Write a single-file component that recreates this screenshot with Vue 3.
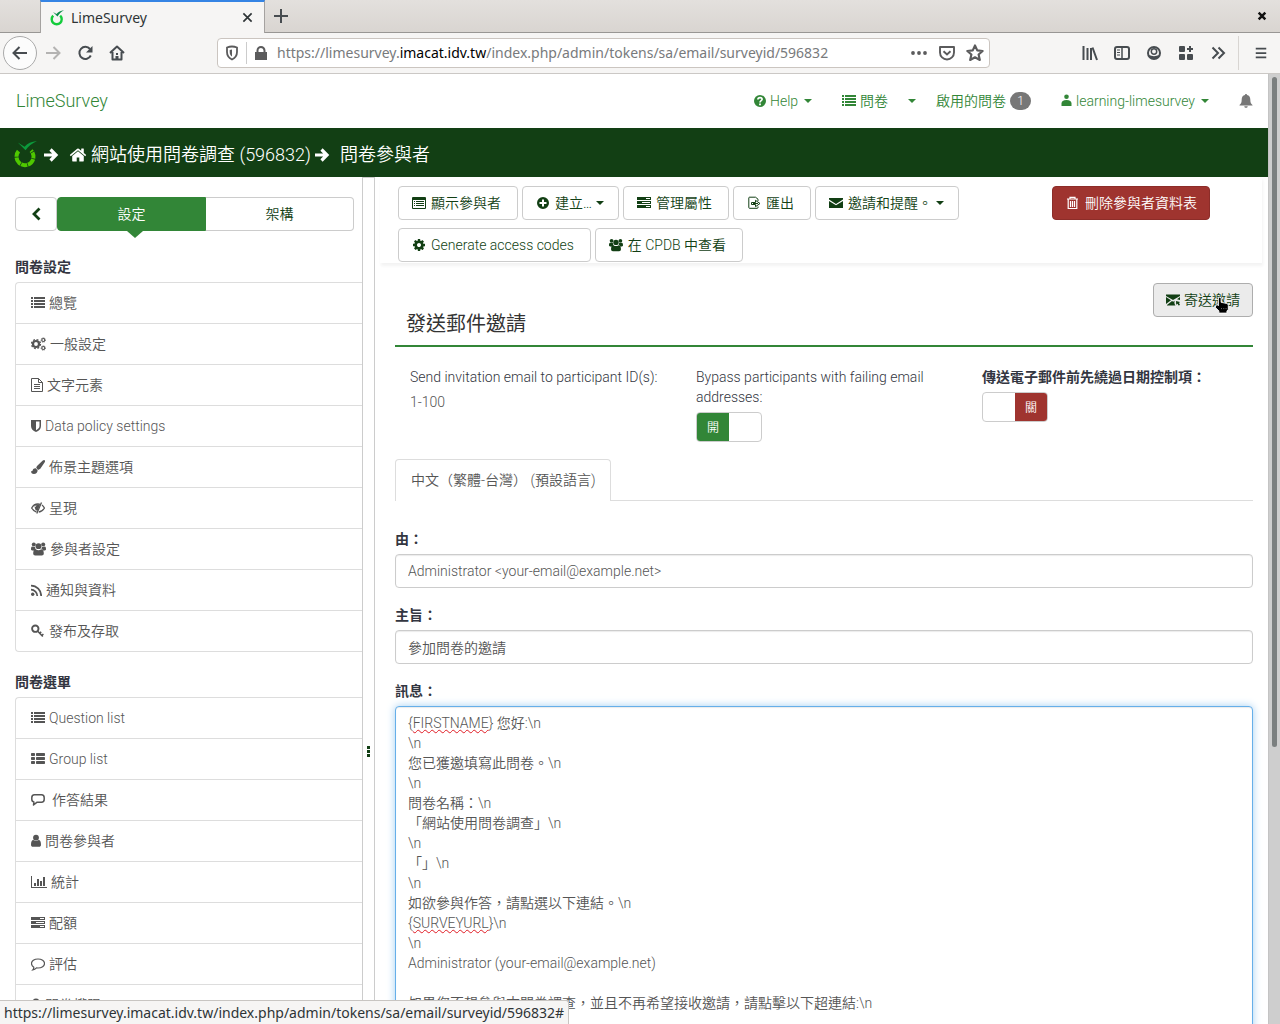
<script setup>
import { h, ref, computed } from 'vue'

const glyphs = {
  list: [14, 14, '<path d="M0 1h2v2H0zM3 1h11v2H3zM0 4h2v2H0zM3 4h11v2H3zM0 7h2v2H0zM3 7h11v2H3zM0 10h2v2H0zM3 10h11v2H3z"/>'],
  thlist: [14, 14, '<rect y="1" width="4" height="3" rx=".7"/><rect x="5" y="1" width="9" height="3" rx=".7"/><rect y="5" width="4" height="3" rx=".7"/><rect x="5" y="5" width="9" height="3" rx=".7"/><rect y="9" width="4" height="3" rx=".7"/><rect x="5" y="9" width="9" height="3" rx=".7"/>'],
  cog: [1792, 1792, '<path d="M1152 896q0-106-75-181t-181-75-181 75-75 181 75 181 181 75 181-75 75-181zm512-109v222q0 12-8 23t-20 13l-185 28q-19 54-39 91 35 50 107 138 10 12 10 25t-9 23q-27 37-99 108t-94 71q-12 0-26-9l-138-108q-44 23-91 38-16 136-29 186-7 28-36 28h-222q-14 0-24.500-8.500t-11.500-21.500l-28-184q-49-16-90-37l-141 107q-10 9-25 9-14 0-25-11-126-114-165-168-7-10-7-23 0-12 8-23 15-21 51-66.500t54-70.500q-27-50-41-99l-183-27q-13-2-21-12.500t-8-23.500v-222q0-12 8-23t19-13l186-28q14-46 39-92-40-57-107-138-10-12-10-24 0-10 9-23 26-36 98.500-107.500t94.500-71.500q13 0 26 10l138 107q44-23 91-38 16-136 29-186 7-28 36-28h222q14 0 24.500 8.500t11.500 21.500l28 184q49 16 90 37l142-107q9-9 24-9 13 0 25 10 129 119 165 170 7 8 7 22 0 12-8 23-15 21-51 66.500t-54 70.500q26 50 41 98l183 28q13 2 21 12.500t8 23.500z"/>'],
  cogs: [15, 14, '<g fill="none" stroke="currentColor"><circle cx="5" cy="7" r="3" stroke-width="2.200"/><circle cx="5" cy="7" r="4.500" stroke-width="1.300" stroke-dasharray="1.900 1.634"/><circle cx="12.300" cy="3" r="1.500" stroke-width="1.200"/><circle cx="12.300" cy="3" r="2.200" stroke-width=".8" stroke-dasharray="1 .728"/><circle cx="12.300" cy="11" r="1.500" stroke-width="1.200"/><circle cx="12.300" cy="11" r="2.200" stroke-width=".8" stroke-dasharray="1 .728"/></g>'],
  file: [12, 14, '<path d="M.5.5h7l4 4v9H.5zM7.500.5v4h4M3 6.500h6M3 8.500h6M3 10.500h6" fill="none" stroke="currentColor"/>'],
  shield: [10, 14, '<path d="M0 1h10v6c0 3-2 4.800-5 6C2 11.800 0 10 0 7zM5 2.500v8.800C7.300 10 8.500 8.800 8.500 7V2.500z" fill-rule="evenodd"/>'],
  brush: [14, 14, '<path d="M13.600.3c.6.5.5 1.200.1 2L9.300 8.700 7 10 5.200 7.700l.8-1.600L11.800.6c.7-.5 1.300-.7 1.800-.3zM4.700 8.300l1.900 2c.1 2-1.400 3.600-3.700 3.600C1 13.900 0 12.600 0 10.900c.9.600 1.300.4 1.700-.7.5-1.400 1.600-2.100 3-1.900z"/>'],
  eye: [14, 14, '<path d="M5.500 11C3.500 10.500 1.800 9 .7 7 2 4.500 4 3 7 3c.8 0 1.500.1 2 .3M11 4c1 .7 1.800 1.700 2.400 3-1.200 2.300-3 3.800-5.600 4" fill="none" stroke="currentColor" stroke-width="1.300"/><path d="M3.800 5C5 3.300 8 3.300 9 4L6.500 10C4.500 9.500 3.300 7.500 3.800 5z"/><path d="M5 4.500l-1 1.500" stroke="#fff" stroke-width=".8"/><path d="M10.500 1.500L5.800 12.500" stroke="currentColor" stroke-width="1.300"/>'],
  users: [15, 14, '<circle cx="2.800" cy="2.500" r="2"/><circle cx="12.200" cy="2.500" r="2"/><circle cx="7.500" cy="4.200" r="2.900"/><path d="M0 7.300C0 5.500.4 4.500 1.200 4.500c1 .6 2 .6 2.900.2 0 1.300.3 2.200 1 2.800-1 0-1.800.4-2.400 1H1.200C.4 8.500 0 8 0 7.300zM15 7.300c0-1.800-.4-2.800-1.200-2.800-1 .6-2 .6-2.900.2 0 1.300-.3 2.200-1 2.800 1 0 1.800.4 2.400 1h1.500c.8 0 1.200-.5 1.200-1.200zM2.200 11.600c0-2.500.6-4.400 2.500-4.400 1.800 1.300 3.800 1.300 5.600 0 1.900 0 2.500 1.900 2.500 4.400 0 1.300-.8 2-2 2H4.200c-1.200 0-2-.7-2-2z"/>'],
  rss: [11, 14, '<circle cx="1.700" cy="11.300" r="1.700"/><path d="M0 6.700A6.300 6.300 0 016.300 13M0 2.600A10.300 10.300 0 0110.200 13" fill="none" stroke="currentColor" stroke-width="1.700"/>'],
  key: [14, 14, '<circle cx="4.300" cy="4.700" r="3.200" fill="none" stroke="currentColor" stroke-width="1.900"/><path d="M6.500 7l5.300 5.500M8.500 9.300l1.700-1.500M10.700 11.500l1.700-1.500" fill="none" stroke="currentColor" stroke-width="1.600"/>'],
  comment: [14, 14, '<path d="M3.500 1.800h7c1.700 0 2.700 1.300 2.700 3v1.500c0 1.700-1 3-2.700 3H5.800L2.500 12l.4-3C1.500 8.800.8 7.800.8 6.300V4.800c0-1.700 1-3 2.700-3z" fill="none" stroke="currentColor" stroke-width="1.500" stroke-linejoin="round"/>'],
  commento: [14, 14, '<path d="M7 2c3.700 0 6.500 2 6.500 4.500S10.700 11 7 11l-1.500-.1C4.500 12 3 12.800 1.800 12.900c.8-.8 1.100-1.600 1-2.700C1.400 9.400.5 8 .5 6.500.5 4 3.300 2 7 2z" fill="none" stroke="currentColor" stroke-width="1.200"/>'],
  user: [10, 14, '<circle cx="5" cy="3.700" r="2.900"/><path d="M0 10.700C0 8 .8 6 2.400 6c1.700 1.200 3.500 1.200 5.200 0C9.200 6 10 8 10 10.700c0 1.400-.8 2.100-2 2.100H2c-1.200 0-2-.7-2-2.100z"/>'],
  person: [10, 14, '<circle cx="5" cy="2.800" r="2.300"/><path d="M0 12V9.500C0 7.200 1.700 6 5 6s5 1.200 5 3.500V12z"/>'],
  chart: [16, 14, '<path d="M0 1h1v11h15v1H0zM3 8h2v3H3zM6 4h2v7H6zM9 6h2v5H9zM12 2h2v9h-2z"/>'],
  tasks: [14, 14, '<path d="M0 1h14v3H0zM9 2v1h4V2zM0 5h14v3H0zM5 6v1h8V6zM0 9h14v3H0zM9 10v1h4v-1z" fill-rule="evenodd"/>'],
  lock: [10, 14, '<path d="M0 6h10v7H0zM1.500 6V4a3.500 3.500 0 017 0v2H7V4a2 2 0 00-4 0v2z"/>'],
  table: [14, 14, '<path d="M1 1h12q1 0 1 1v10q0 1-1 1H1q-1 0-1-1V2q0-1 1-1zM1 4v8h12V4z" fill-rule="evenodd"/><path d="M2 5h1v1H2zM4 5h8v1H4zM2 7h1v1H2zM4 7h8v1H4zM2 9h1v1H2zM4 9h8v1H4z"/>'],
  plus: [14, 14, '<path d="M7 1a6 6 0 110 12A6 6 0 017 1zM6 3.500V6H3.500v2H6v2.500h2V8h2.500V6H8V3.500z" fill-rule="evenodd"/>'],
  exporter: [14, 14, '<path d="M2.500 1.200h6l2.500 2V5M2.500 1.200Q1.800 1.200 1.800 2v9.500q0 .8.700.8H10q1 0 1-.8V10.500" fill="none" stroke="currentColor"/><path d="M4.500 6.500h4V4.300L13 7.500 8.500 10.700V8.500h-4z" fill="none" stroke="currentColor"/><path d="M6 7.500h5" stroke="currentColor"/>'],
  mail: [14, 14, '<path d="M0 2h14v1.500L7 8 0 3.500zM0 5l7 4.300L14 5v7H0z"/>'],
  mailout: [14, 14, '<path d="M0 1.500h14V3L7 7 0 3zM0 4l5 3.300L0 11zM14 4v3l-3-.8zM1 12l5-4 1.200.7 1.500-1C8 9.500 8.500 11 9.500 12.500H1zM10 8l4 1-1 1 1 2-1.500.5-1-1.800-1.300 1z"/>'],
  trash: [14, 14, '<path d="M2 3h11M5 3V1.400h5V3M3.200 3.500v9h8.600v-9M5.500 5v6M7.500 5v6M9.500 5v6" fill="none" stroke="currentColor" stroke-width="1.200"/>'],
  help: [12, 14, '<circle cx="6" cy="7" r="6"/><path d="M3.900 5.500C4 3 8.200 3 8.100 5.300 8 6.700 6.100 6.500 6 8.500" fill="none" stroke="#fff" stroke-width="1.700"/><path d="M5.100 9.500h1.800v1.700H5.100z" fill="#fff"/>'],
  bell: [14, 14, '<path d="M7 0c.7 0 1 .4 1 1 2.300.5 3.300 2.200 3.300 4.500 0 3 .7 4.200 2.200 5.500v.6H.5V11C2 9.700 2.700 8.500 2.700 5.500 2.700 3.200 3.700 1.500 6 1c0-.6.300-1 1-1zM5.300 12.200h3.400c0 2.200-3.400 2.200-3.400 0z"/>'],
  home: [1792, 1792, '<path d="M1472 992v480q0 26-19 45t-45 19h-384v-384h-256v384h-384q-26 0-45-19t-19-45v-480q0-1 .5-3t.5-3l575-474 575 474q1 2 1 6zm223-69l-62 74q-8 9-21 11h-3q-13 0-21-7l-692-577-692 577q-12 8-24 7-13-2-21-11l-62-74q-8-10-7-23.500t11-21.500l719-599q32-26 76-26t76 26l244 204v-195q0-14 9-23t23-9h192q14 0 23 9t9 23v408l219 182q10 8 11 21.500t-7 23.500z"/>'],
  arrow: [16, 16, '<path d="M1 8h12M7.500 2.500L13 8l-5.500 5.500" fill="none" stroke="currentColor" stroke-width="3.200"/>'],
  chevron: [14, 14, '<path d="M10.500 1.500L5 7l5.500 5.500" fill="none" stroke="currentColor" stroke-width="2.800"/>'],
  lime: [24, 28, '<path d="M4.700 10.500A8.900 8.900 0 1017.800 10" fill="none" stroke="#4fc800" stroke-width="4.200" stroke-dasharray="6.300 .8 8.200 .8"/><path d="M4 1.500L11 6C14 2.500 18 .5 24 0c-5.500 2.500-9 5.500-12 9.500z" fill="#0c9a3c"/>'],
  limetab: [14, 16, '<path d="M3.200 5.700a5 5 0 107 0" fill="none" stroke="#14cc3c" stroke-width="2.400"/><path d="M3 2l3.500 2C8.500 2 10.500.6 14 .3 11 2 9 4 7.500 6.500z" fill="#0a8a4a"/>'],
  back: [16, 16, '<path d="M15 8H2M7.500 2L1.500 8l6 6" fill="none" stroke="currentColor" stroke-width="2"/>'],
  forward: [16, 16, '<path d="M1 8h13M8.500 2l6 6-6 6" fill="none" stroke="currentColor" stroke-width="2"/>'],
  reload: [16, 16, '<path d="M13.800 10.500A6 6 0 1113 4" fill="none" stroke="currentColor" stroke-width="2"/><path d="M15.500 1v6.500H9z"/>'],
  house: [16, 16, '<path d="M1 8l7-6.500L15 8M3.500 7v7.500h9V7" fill="none" stroke="currentColor" stroke-width="2" stroke-linejoin="round"/><path d="M7 8h2v2H7zM6.500 11h3v4h-3z"/>'],
  guard: [14, 16, '<path d="M2 2.500Q7 .5 12 2.500V7c0 4-2 6-5 7.500C4 13 2 11 2 7z" fill="none" stroke="currentColor" stroke-width="1.800"/><path d="M7 4.500v7C5.500 10.500 4.700 9 4.700 7V5z"/>'],
  padlock: [14, 16, '<path d="M1 7h12v8H1zM2.500 7V5.500a4.500 4.500 0 019 0V7h-2V5.500a2.500 2.500 0 00-5 0V7z"/>'],
  dots: [16, 16, '<circle cx="2" cy="8" r="1.900"/><circle cx="8" cy="8" r="1.900"/><circle cx="14" cy="8" r="1.900"/>'],
  pocket: [16, 16, '<path d="M1 2h14v5.500a7 7 0 01-14 0z" fill="none" stroke="currentColor" stroke-width="1.900" stroke-linejoin="round"/><path d="M4.500 6.300L8 9.500l3.500-3.200" fill="none" stroke="currentColor" stroke-width="1.900"/>'],
  star: [16, 16, '<path d="M8 1.300l2 4.400 4.800.5-3.600 3.200 1.100 4.800L8 11.800l-4.300 2.400 1.100-4.800L1.200 6.200 6 5.700z" fill="none" stroke="currentColor" stroke-width="1.900" stroke-linejoin="round"/>'],
  library: [16, 16, '<path d="M1.500 1v14M5.500 3v12M9 3v12M10.500 2.500L15 15" fill="none" stroke="currentColor" stroke-width="2"/>'],
  sidebar: [16, 16, '<rect x="1" y="2" width="14" height="12" rx="2" fill="none" stroke="currentColor" stroke-width="2"/><path d="M8 2v12" stroke="currentColor" stroke-width="1.500"/><path d="M3 5h3M3 7.500h3M3 10h3" stroke="currentColor"/>'],
  account: [16, 16, '<circle cx="8" cy="8" r="6" fill="none" stroke="currentColor" stroke-width="2"/><circle cx="8" cy="6.500" r="2.700" fill="none" stroke="currentColor" stroke-width="1.500"/><path d="M3 10c3 1.500 7 1.500 10 0-1 3-3 4-5 4s-4-1-5-4z"/>'],
  addons: [16, 16, '<rect x="1" y="1" width="6" height="6" rx="1"/><rect x="1" y="9" width="6" height="6" rx="1"/><rect x="9" y="9" width="6" height="6" rx="1"/><path d="M9 4h6M12 1v6" stroke="currentColor" stroke-width="2"/>'],
  more: [16, 16, '<path d="M2.500 2.500L8 8l-5.500 5.500M8.500 2.500L14 8l-5.500 5.500" fill="none" stroke="currentColor" stroke-width="2"/>'],
  menu: [14, 16, '<path d="M1 3h12M1 8h12M1 13h12" stroke="currentColor" stroke-width="2"/>'],
  cross: [12, 12, '<path d="M1.500 1.500l9 9M10.500 1.500l-9 9" stroke="currentColor" stroke-width="1.800"/>'],
  exit: [12, 12, '<path d="M2 2l8 8M10 2l-8 8" stroke="currentColor" stroke-width="3"/>'],
  add: [14, 14, '<path d="M0 7h14M7 0v14" stroke="currentColor" stroke-width="2"/>'],
  hand: [16, 20, '<path d="M4 2Q5.500.5 7 2v5l6 1.200q2 .3 2 2v5l-1.500 1.300V19h-9v-2.500L.8 13v-2.500L3 9.800l1 1z" fill="#000" stroke="#fff" stroke-width="1"/><path d="M7 14h1M9.500 14h1M12 14h1" stroke="#888"/>']
}

const Icon = (props) => {
  const [w, hgt, body] = glyphs[props.name]
  return h('svg', { viewBox: `0 0 ${w} ${hgt}`, fill: 'currentColor', 'aria-hidden': 'true', innerHTML: body })
}
Icon.props = ['name']

const menus = [
  {
    title: '問卷設定',
    items: [
      ['list', '總覽'], ['cogs', '一般設定', 'w15'], ['file', '文字元素', 'w12'], ['shield', 'Data policy settings', 'w10'],
      ['brush', '佈景主題選項'], ['eye', '呈現'], ['users', '參與者設定', 'w15'], ['rss', '通知與資料', 'w11'], ['key', '發布及存取']
    ]
  },
  {
    title: '問卷選單',
    items: [
      ['list', 'Question list'], ['thlist', 'Group list'], ['comment', '作答結果', 'wide'], ['user', '問卷參與者', 'w10'],
      ['chart', '統計', 'w16'], ['tasks', '配額'], ['commento', '評估'], ['lock', '問卷權限', 'w10']
    ]
  }
]

const actions = [
  { icon: 'table', text: '顯示參與者' },
  { icon: 'plus', text: '建立…', caret: true },
  { icon: 'tasks', text: '管理屬性' },
  { icon: 'exporter', text: '匯出' },
  { icon: 'mail', text: '邀請和提醒。', caret: true },
  { icon: 'cog', text: 'Generate access codes' },
  { icon: 'users', text: '在 CPDB 中查看' }
]

const sender = ref('Administrator <your-email@example.net>')
const subject = ref('參加問卷的邀請')
const message = ref([
  '{FIRSTNAME} 您好:\\n', '\\n', '您已獲邀填寫此問卷。\\n', '\\n', '問卷名稱：\\n', '「網站使用問卷調查」\\n', '\\n', '「」\\n', '\\n',
  '如欲參與作答，請點選以下連結。\\n', '{SURVEYURL}\\n', '\\n', 'Administrator (your-email@example.net)', '',
  '如果您不想參與本問卷調查，並且不再希望接收邀請，請點擊以下超連結:\\n'
].join('\n'))
const bypassFailing = ref(true)
const bypassDates = ref(false)

// Spelling marks: placeholder names are underlined at the start of a line.
const marks = computed(() => message.value.split('\n').map((l) => (l.match(/^\{([A-Z]+)\}/) || [])[1] || ''))
</script>

<template>
  <div class="window" lang="zh-Hant">
    <header class="chrome">
      <div class="tabstrip">
        <div class="tab">
          <Icon name="limetab" class="fav" />
          <span>LimeSurvey</span>
          <button class="plain" aria-label="Close tab"><Icon name="cross" class="i10" /></button>
        </div>
        <button class="plain newtab" aria-label="New tab"><Icon name="add" class="i14" /></button>
        <button class="plain close" aria-label="Close window"><Icon name="exit" class="i8" /></button>
      </div>
      <div class="toolbar">
        <button class="plain back" aria-label="Back"><Icon name="back" class="i16" /></button>
        <button class="plain dim" aria-label="Forward"><Icon name="forward" class="i16" /></button>
        <button class="plain" aria-label="Reload"><Icon name="reload" class="i16" /></button>
        <button class="plain" aria-label="Home"><Icon name="house" class="i16" /></button>
        <div class="urlbar">
          <Icon name="guard" class="i16" />
          <i class="rule"></i>
          <Icon name="padlock" class="i16" />
          <span class="url">https://limesurvey.<b>imacat.idv.tw</b>/index.php/admin/tokens/sa/email/surveyid/596832</span>
          <Icon name="dots" class="i16" />
          <Icon name="pocket" class="i16 pk" />
          <Icon name="star" class="i18" />
        </div>
        <div class="tools">
          <button class="plain" aria-label="Library"><Icon name="library" class="i16" /></button>
          <button class="plain" aria-label="Sidebars"><Icon name="sidebar" class="i16" /></button>
          <button class="plain" aria-label="Account"><Icon name="account" class="i16" /></button>
          <button class="plain" aria-label="Extensions"><Icon name="addons" class="i16" /></button>
          <button class="plain" aria-label="More tools"><Icon name="more" class="i16" /></button>
        </div>
        <button class="plain menu" aria-label="Menu"><Icon name="menu" class="i14" /></button>
      </div>
    </header>

    <div class="viewport">
      <div class="page">
        <nav class="nav">
          <a href="#" class="brand">LimeSurvey</a>
          <a href="#" class="link"><Icon name="help" class="g w12" />Help<i class="caret"></i></a>
          <a href="#" class="link surveys"><Icon name="list" class="g w14" />問卷</a>
          <a href="#" class="link drop" aria-label="More surveys"><i class="caret"></i></a>
          <a href="#" class="link active">啟用的問卷<span class="badge">1</span></a>
          <a href="#" class="link"><Icon name="person" class="g w11" />learning-limesurvey<i class="caret"></i></a>
          <a href="#" class="link bell" aria-label="Notifications"><Icon name="bell" class="i14" /></a>
        </nav>

        <div class="crumbs">
          <Icon name="lime" class="logo" />
          <Icon name="arrow" class="i16" />
          <a href="#" class="survey"><Icon name="home" class="i18" />網站使用問卷調查 (596832)</a>
          <Icon name="arrow" class="i16" />
          <span class="here">問卷參與者</span>
        </div>

        <div class="body">
          <aside class="side">
            <div class="switch">
              <button class="btn fold" aria-label="Collapse"><Icon name="chevron" class="i14" /></button>
              <button class="btn on">設定</button>
              <button class="btn off">架構</button>
            </div>
            <section v-for="m in menus" :key="m.title">
              <h2>{{ m.title }}</h2>
              <ul>
                <li v-for="[icon, text, cls] in m.items" :key="text">
                  <a href="#"><Icon :name="icon" class="g" :class="cls || 'w14'" />{{ text }}</a>
                </li>
              </ul>
            </section>
          </aside>
          <div class="gutter"><i></i><i></i><i></i></div>

          <main class="main">
            <div class="panel">
              <div class="actions">
                <button v-for="a in actions" :key="a.text" class="btn">
                  <Icon :name="a.icon" class="i14" />{{ a.text }}<i v-if="a.caret" class="caret"></i>
                </button>
              </div>
              <div><button class="btn danger"><Icon name="trash" class="i14" />刪除參與者資料表</button></div>
            </div>

            <form class="content" @submit.prevent>
              <div class="titlebar">
                <h1>發送郵件邀請</h1>
                <button class="btn send"><Icon name="mailout" class="i14" />寄送邀請<Icon name="hand" class="pointer" /></button>
              </div>

              <div class="cols">
                <div>
                  <span class="label">Send invitation email to participant ID(s):</span>
                  <p>1-100</p>
                </div>
                <div>
                  <label for="failing">Bypass participants with failing email addresses:</label>
                  <span class="toggle" :class="{ yes: bypassFailing }">
                    <input id="failing" v-model="bypassFailing" type="checkbox">
                    <span>{{ bypassFailing ? '開' : '關' }}</span>
                  </span>
                </div>
                <div>
                  <label for="dates" class="strong">傳送電子郵件前先繞過日期控制項：</label>
                  <span class="toggle" :class="{ yes: bypassDates }">
                    <input id="dates" v-model="bypassDates" type="checkbox">
                    <span>{{ bypassDates ? '開' : '關' }}</span>
                  </span>
                </div>
              </div>

              <div class="tabs"><a href="#">中文（繁體-台灣） (預設語言)</a></div>

              <div class="field">
                <label for="from">由：</label>
                <input id="from" v-model="sender" type="text">
              </div>
              <div class="field">
                <label for="subject">主旨：</label>
                <input id="subject" v-model="subject" type="text">
              </div>
              <div class="field">
                <label for="message">訊息：</label>
                <div class="editor">
                  <textarea id="message" v-model="message" rows="20" spellcheck="false"></textarea>
                  <div class="marks" aria-hidden="true">
                    <div v-for="(word, n) in marks" :key="n"><template v-if="word">{<u>{{ word }}</u></template></div>
                  </div>
                </div>
              </div>
            </form>
          </main>
        </div>
      </div>
      <div class="scroll"><i></i></div>
    </div>
    <div class="status">https://limesurvey.imacat.idv.tw/index.php/admin/tokens/sa/email/surveyid/596832#</div>
  </div>
</template>

<style>
body { margin: 0; background: #fff; }
</style>

<style scoped>
* { box-sizing: border-box; }
.window {
  height: 100vh; overflow: hidden; display: flex; flex-direction: column; position: relative;
  font: 350 14px/20px Roboto, "Noto Sans CJK TC", sans-serif; color: #555;
}
button, input, textarea { font: inherit; }
a { text-decoration: none; color: inherit; }
svg { display: block; flex: none; }
.i8 { width: 10px; height: 10px; }
.i10 { width: 11px; height: 11px; }
.i14 { width: 14px; height: 14px; }
.i16 { width: 16px; height: 16px; }
.i18 { width: 18px; height: 18px; }
.g { height: 14px; }
.w10 { width: 10px; }
.w11 { width: 11px; }
.w12 { width: 12px; }
.w14 { width: 14px; }
.w15 { width: 15px; }
.w16 { width: 16px; }
.wide { width: 14px; margin-right: 3px; }
.plain { border: 0; background: none; padding: 0; color: inherit; display: flex; align-items: center; justify-content: center; }
.caret { border: 4px solid transparent; border-top-color: currentColor; border-bottom: 0; }

.chrome { font-family: "Noto Sans", sans-serif; font-weight: 400; color: #474c50; flex: none; }
.tabstrip { height: 33px; display: flex; align-items: center; padding-left: 40px; background: linear-gradient(#e3e0dd, #d9d5d1); border-bottom: 1px solid #989694; }
.tab { height: 33px; width: 225px; display: flex; align-items: center; padding: 0 11px 0 9px; background: #f6f5f4; border: 1px solid #a5a2a0; border-width: 2px 1px 0; border-top-color: #3584e4; align-self: flex-start; color: #2e3436; }
.tab span { flex: 1; margin-left: 7px; }
.fav { width: 14px; height: 16px; }
.newtab { margin-left: 9px; }
.close { margin-left: auto; margin-right: 13px; color: #111; }
.toolbar { height: 41px; display: flex; align-items: center; background: #f6f5f4; border-bottom: 1px solid #cbc8c5; padding: 0 12px 0 3px; gap: 16px; }
.back { width: 34px; height: 34px; border: 1px solid #aaa; border-radius: 50%; background: #fcfcfc; }
.back + .dim { color: #b4b3b2; margin-left: -8px; }
.urlbar { flex: 1; margin-left: 76px; height: 30px; display: flex; align-items: center; border: 1px solid #cbc5c0; border-radius: 4px; background: #fff; padding: 0 5px 0 6px; color: #5b5b5c; }
.rule { width: 1px; height: 22px; background: #ccc; margin: 0 6px; }
.url { flex: 1; margin-left: 8px; color: #787a7c; white-space: nowrap; overflow: hidden; }
.url b { font-weight: 400; color: #000; }
.pk { margin: 0 11px 0 12px; }
.tools { display: flex; gap: 16px; margin-left: 76px; padding-right: 12px; height: 34px; border-right: 1px solid #d8d5d2; }
.menu { margin-left: -1px; }

.viewport { flex: 1; min-height: 0; display: flex; }
.page { flex: 1; min-width: 0; display: flex; flex-direction: column; overflow: hidden; background: #fff; }
.scroll { width: 12px; background: #cecece; padding: 3px; flex: none; border-left: 1px solid #c4c4c4; }
.scroll i { display: block; height: 71%; border-radius: 3px; background: #7b7f7f; }

.nav { height: 54px; flex: none; display: flex; align-items: center; padding: 0 15px 0 16px; color: #328637; }
.brand { font-size: 18px; margin-right: auto; }
.link { display: flex; align-items: center; gap: 4px; margin-left: 30px; }
.link .caret { margin-left: 2px; }
.drop { margin-left: 18px; }
.active { margin-left: 20px; }
.badge { background: #777; color: #fff; border-radius: 10px; font-size: 12px; line-height: 18px; width: 21px; text-align: center; }
.bell { color: #777; }

.crumbs { height: 49px; flex: none; display: flex; align-items: center; background: #123f14; color: #fff; padding: 4px 14px 0; font-size: 18px; }
.logo { width: 23px; height: 27px; margin-right: 6px; }
.survey { display: flex; align-items: center; gap: 4px; margin: 0 3px 0 10px; }
.here { margin-left: 10px; }

.body { flex: 1; min-height: 0; display: flex; }
.side { width: 29%; max-width: 362px; flex: none; padding: 20px 0 0 15px; overflow: hidden; }
.btn { height: 34px; display: inline-flex; align-items: center; justify-content: center; gap: 6px; border: 1px solid #ccc; border-radius: 4px; background: #fff; color: #123f14; padding: 0 12px; white-space: nowrap; }
.switch { display: flex; padding-right: 8px; margin-bottom: 26px; }
.fold { width: 42px; }
.on, .off { flex: 1; padding: 0; }
.on { background: #328637; border-color: #328637; color: #fff; border-radius: 4px 0 0 4px; position: relative; }
.on::after { content: ""; position: absolute; top: 33px; left: 69px; border: 8px solid transparent; border-top: 7px solid #328637; border-bottom: 0; }
.off { border-radius: 0 4px 4px 0; border-left: 0; }
h2 { font-size: 14px; line-height: 20px; font-weight: 700; color: #333641; margin: 0 0 5px; }
ul { list-style: none; margin: 0 0 20px; padding: 0; border: 1px solid #ddd; border-right: 0; border-radius: 4px 0 0 4px; }
li + li { border-top: 1px solid #ddd; }
li a { height: 40px; display: flex; align-items: center; gap: 4px; padding-left: 15px; }
.gutter { width: 13px; flex: none; border: 1px solid #ccc; border-width: 1px 1px 0; display: flex; flex-direction: column; align-items: center; justify-content: center; gap: 1px; }
.gutter i { width: 3px; height: 3px; background: #123f14; }
.gutter::before { content: ""; height: 300px; }

.main { flex: 1; min-width: 0; overflow: hidden; }
.panel { display: grid; grid-template-columns: 3fr 1fr; column-gap: 24px; padding: 9px 0 1px 18px; margin: 0 6px 0 5px; box-shadow: 1px 3px 3px #f3f3f3; }
.actions { display: flex; flex-wrap: wrap; gap: 8px 4px; }
.actions .btn { gap: 5px; padding: 0 16px 0 13px; }
.actions .btn:has(.caret) { padding-right: 14px; }
.btn .caret { margin-left: -1px; }
.danger { background: #9f342f; border-color: #8c2d29; color: #fff; }
.content { padding: 20px 15px 0 20px; }
.titlebar { display: flex; align-items: flex-start; justify-content: space-between; height: 64px; border-bottom: 2px solid #328637; padding-left: 11px; }
h1 { font-size: 20px; line-height: 24px; font-weight: 400; color: #333; margin: 29px 0 0; }
.send { background: #ebebeb; border-color: #adadad; gap: 4px; position: relative; }
.pointer { position: absolute; width: 16px; height: 18px; left: 60px; top: 12px; }
.cols { display: grid; grid-template-columns: repeat(3, 1fr); padding-top: 20px; }
.cols > div { padding: 0 15px; }
.label, .cols label { display: block; color: #333641; margin-bottom: 5px; }
.cols .strong { font-weight: 700; }
.cols p { margin: 0; }
.toggle { display: flex; width: 66px; height: 30px; border: 1px solid #ccc; border-radius: 4px; overflow: hidden; position: relative; font-size: 12px; justify-content: flex-end; }
.toggle input { position: absolute; inset: 0; width: 100%; height: 100%; margin: 0; opacity: 0; }
.toggle span { width: 50%; background: #9f342f; color: #fff; display: flex; align-items: center; justify-content: center; padding-top: 2px; }
.toggle.yes { justify-content: flex-start; }
.toggle.yes span { background: #328637; }
.tabs { margin: 17px 0 28px; border-bottom: 1px solid #ddd; display: flex; }
.tabs a { border: 1px solid #ddd; border-bottom: 0; border-radius: 4px 4px 0 0; background: #fff; padding: 10px 15px 11px; margin-bottom: -1px; line-height: 20px; }
.field { margin-bottom: 17px; }
.field label { display: block; font-weight: 700; color: #333641; margin-bottom: 5px; }
.field input, textarea { display: block; width: 100%; border: 1px solid #ccc; border-radius: 4px; padding: 6px 12px; color: #555; background: #fff; box-shadow: inset 0 1px 1px #ececec; }
.field input { height: 34px; }
.editor { display: grid; }
.editor > * { grid-area: 1 / 1; }
.editor textarea { border-color: #66afe9; box-shadow: inset 0 1px 1px #ececec, 0 0 8px #a3cff2; resize: none; outline: 0; overflow: hidden; }
.marks { padding: 7px 13px; color: transparent; pointer-events: none; }
.marks div { height: 20px; }
.marks u { text-decoration: underline wavy #e01b24 1px; text-decoration-skip-ink: none; }

.status { position: absolute; left: 0; bottom: 0; height: 24px; padding: 1px 4px; background: #f6f5f4; border: 1px solid #c8c5c2; border-width: 1px 1px 0 0; border-radius: 0 3px 0 0; font: 400 14px/22px "Noto Sans", sans-serif; color: #2e3436; white-space: nowrap; }
</style>
